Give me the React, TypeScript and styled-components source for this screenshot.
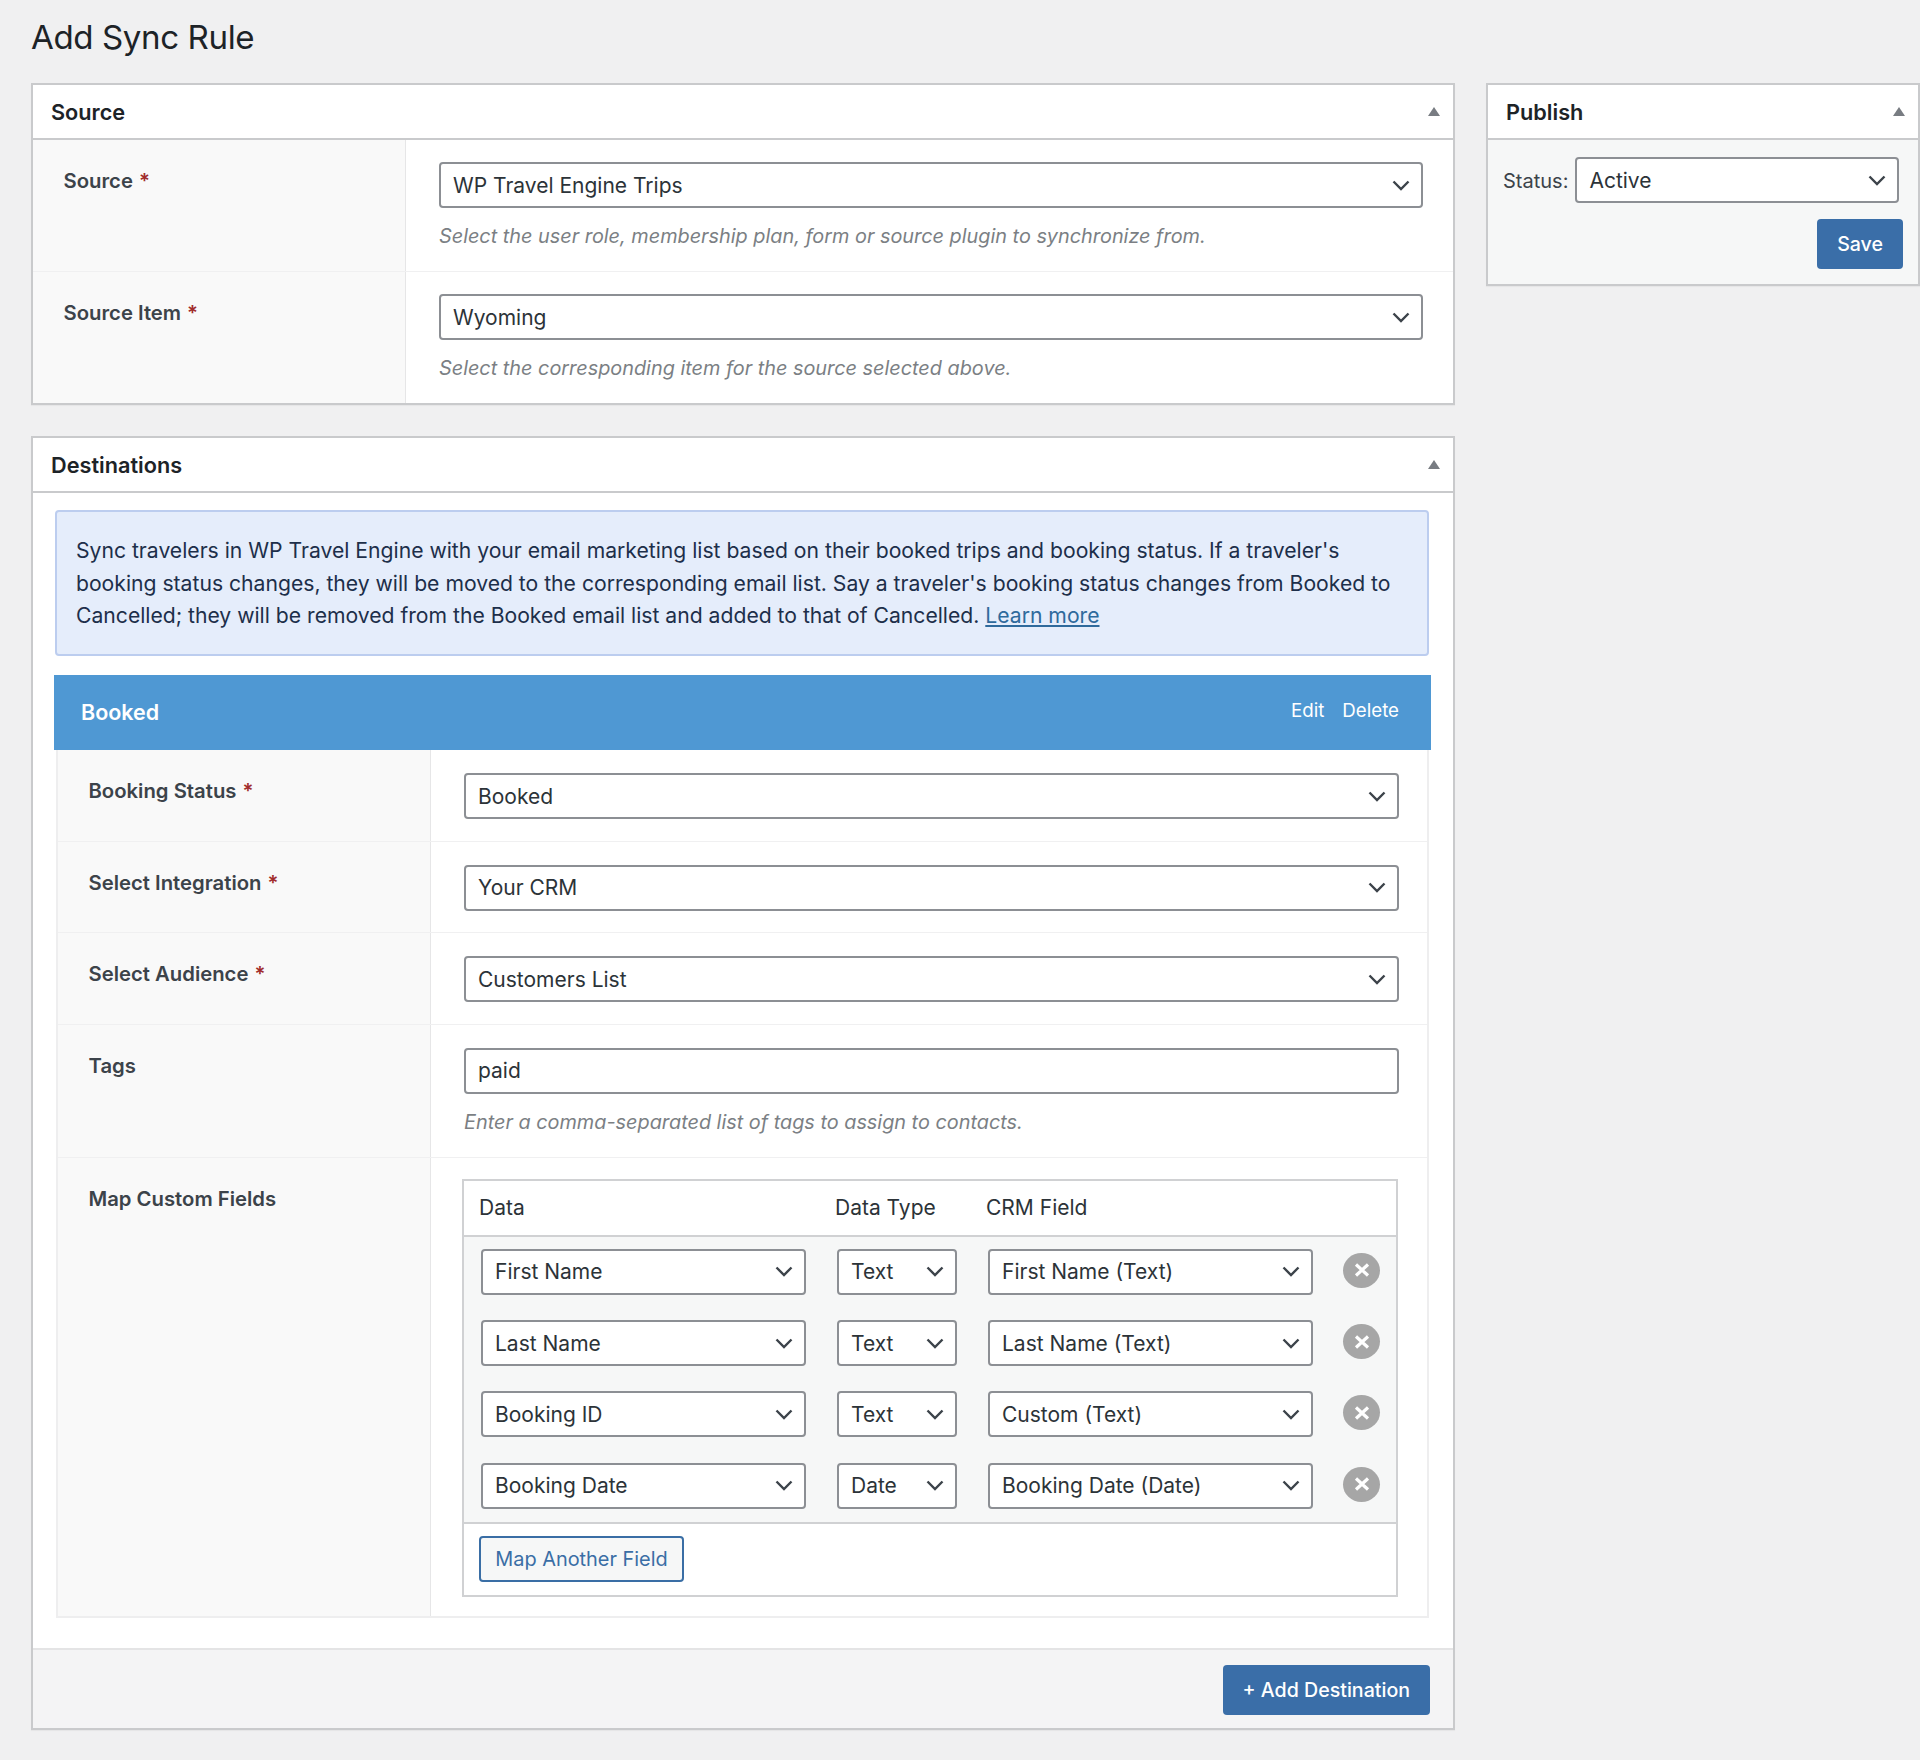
import { Fragment } from "react";
import styled, { createGlobalStyle } from "styled-components";

const Global = createGlobalStyle`
  html, body {
    margin: 0;
    padding: 0;
    background: #f0f0f1;
    color: #2c3338;
    font-family: Inter, "Noto Sans", "Liberation Sans", sans-serif;
    font-size: 20px;
  }
  * { box-sizing: border-box; }
`;

const S = {
  Page: styled.div`
    width: 1920px;
    height: 1760px;
    padding-left: 31px;
    overflow: hidden;
  `,
  Title: styled.h1`
    margin: 0;
    height: 83px;
    padding-top: 15px;
    font-size: 33.1px;
    line-height: 44px;
    font-weight: 400;
    letter-spacing: -0.4px;
    color: #1d2327;
  `,
  Columns: styled.div`
    display: flex;
    align-items: flex-start;
    gap: 31px;
  `,
  Main: styled.div`
    width: 1424px;
    display: flex;
    flex-direction: column;
    gap: 31px;
  `,
  Side: styled.div`
    width: 434px;
  `,
  Card: styled.section`
    background: #fff;
    border: 2px solid #c9cacc;
    box-shadow: 0 1px 1px rgba(0, 0, 0, 0.04);
  `,
  CardHead: styled.header`
    height: 55px;
    padding: 0 13px 0 18px;
    display: flex;
    align-items: center;
    justify-content: space-between;
    border-bottom: 2px solid #c9cacc;
    background: #fff;
  `,
  CardTitle: styled.h2`
    margin: 0;
    font-size: 21.7px;
    font-weight: 600;
    color: #1d2327;
  `,
  Row: styled.div`
    display: grid;
    grid-template-columns: 373px 1fr;
    border-bottom: 1px solid #f0f0f1;
    &:last-child { border-bottom: 0; }
  `,
  LabelCell: styled.div`
    padding: 27px 10px 0 30.5px;
    background: #f9f9f9;
    border-right: 1px solid #e6e6e7;
    font-size: 20.3px;
    line-height: 28px;
    font-weight: 600;
    color: #3c434a;
  `,
  Required: styled.span`
    margin-left: 6px;
    color: #a12c2c;
  `,
  ValueCell: styled.div<{ $top?: number; $bottom?: number; $end?: number }>`
    padding: ${(p) => p.$top ?? 23}px ${(p) => p.$end ?? 30}px ${(p) => p.$bottom ?? 21}px 33px;
  `,
  Select: styled.div`
    height: 46px;
    padding: 0 11px 0 12px;
    display: flex;
    flex: 1;
    align-items: center;
    justify-content: space-between;
    background: #fff;
    border: 2px solid #8c8f94;
    border-radius: 4px;
    font-size: 21px;
    color: #2c3338;
  `,
  TextBox: styled.div`
    height: 46px;
    padding: 0 12px;
    display: flex;
    align-items: center;
    background: #fff;
    border: 2px solid #8c8f94;
    border-radius: 4px;
    font-size: 21px;
    color: #2c3338;
  `,
  Hint: styled.p`
    margin: 15px 0 0;
    font-size: 19.85px;
    line-height: 27px;
    font-style: italic;
    color: #7b7f84;
  `,
  Body: styled.div`
    padding: 17px 22px 30px 21px;
  `,
  Notice: styled.div`
    margin: 0 2px 19px 1px;
    padding: 23px 17px 21px 19px;
    background: #e5edfb;
    border: 2px solid #bccdef;
    border-radius: 4px;
    font-size: 21.15px;
    line-height: 32.7px;
    color: #1d2f4a;
  `,
  Link: styled.a`
    color: #2f6a9c;
    text-decoration: underline;
  `,
  Bar: styled.div`
    height: 75px;
    padding: 0 32px 2px 27px;
    display: flex;
    align-items: center;
    justify-content: space-between;
    background: #4f98d3;
    color: #fff;
  `,
  BarTitle: styled.span`
    font-size: 21.5px;
    font-weight: 600;
  `,
  BarActions: styled.span`
    display: flex;
    gap: 18px;
    padding-bottom: 3px;
    font-size: 18.7px;
  `,
  DestTable: styled.div`
    margin: 0 2px 0 2px;
    border: 2px solid #eeeeef;
    border-top: 0;
  `,
  MapTable: styled.div`
    margin-left: -2px;
    border: 2px solid #d0d1d3;
  `,
  MapHead: styled.div`
    height: 54px;
    padding-left: 15px;
    display: grid;
    grid-template-columns: 356px 151px 1fr;
    align-items: center;
    font-size: 21px;
    color: #2c3338;
  `,
  MapBody: styled.div`
    padding: 12px 0 13px 17px;
    display: grid;
    grid-template-columns: 325px 120px 325px 37px;
    column-gap: 31px;
    row-gap: 25.4px;
    align-items: center;
    background: #f6f7f7;
    border-top: 2px solid #d0d1d3;
    border-bottom: 2px solid #d0d1d3;
  `,
  Remove: styled.span`
    width: 37px;
    height: 35px;
    margin: -3px 0 0 -1px;
    display: flex;
    align-items: center;
    justify-content: center;
    border-radius: 50%;
    background: #a6a6a6;
  `,
  MapFoot: styled.div`
    padding: 12px 15px 13px;
  `,
  OutlineButton: styled.button`
    display: block;
    width: 205px;
    height: 46px;
    padding: 0;
    background: #f6f7f7;
    border: 2px solid #3a6ea5;
    border-radius: 4px;
    font: inherit;
    font-size: 19.9px;
    color: #3a6ea5;
  `,
  Footer: styled.div`
    padding: 15px 23px 13px;
    display: flex;
    justify-content: flex-end;
    background: #f4f4f5;
    border-top: 2px solid #e4e4e5;
  `,
  PrimaryButton: styled.button`
    height: 50px;
    padding: 0 20px;
    background: #3a6ea8;
    border: 0;
    border-radius: 4px;
    font: inherit;
    font-size: 19.6px;
    font-weight: 500;
    color: #fff;
  `,
  PublishBody: styled.div`
    padding: 17px 15px 15px 15px;
    background: #f6f7f7;
  `,
  StatusLine: styled.div`
    display: flex;
    align-items: center;
    gap: 7px;
    padding-right: 4px;
    font-size: 20px;
    color: #3c434a;
  `,
  StatusLabel: styled.span`
    margin-top: 2px;
  `,
  SaveLine: styled.div`
    margin-top: 16px;
    display: flex;
    justify-content: flex-end;
  `,
};

const Chevron = () => (
  <svg width="18" height="11" viewBox="0 0 18 11" fill="none">
    <path d="M1.5 1.5 L9 9 L16.5 1.5" stroke="#3c434a" strokeWidth="2.4" />
  </svg>
);

const Toggle = () => (
  <svg width="12" height="9" viewBox="0 0 12 9">
    <polygon points="6,0 12,9 0,9" fill="#787c82" />
  </svg>
);

const Cross = () => (
  <svg width="16" height="14" viewBox="0 0 16 14" fill="none">
    <path d="M2 1.5 L14 12.5 M14 1.5 L2 12.5" stroke="#fff" strokeWidth="3.2" />
  </svg>
);

const Select = ({ value }: { value: string }) => (
  <S.Select>
    {value}
    <Chevron />
  </S.Select>
);

const Required = () => <S.Required>*</S.Required>;

const mappings = [
  ["First Name", "Text", "First Name (Text)"],
  ["Last Name", "Text", "Last Name (Text)"],
  ["Booking ID", "Text", "Custom (Text)"],
  ["Booking Date", "Date", "Booking Date (Date)"],
];

export default function App() {
  return (
    <S.Page>
      <Global />
      <S.Title>Add Sync Rule</S.Title>
      <S.Columns>
        <S.Main>
          <S.Card>
            <S.CardHead>
              <S.CardTitle>Source</S.CardTitle>
              <Toggle />
            </S.CardHead>
            <S.Row>
              <S.LabelCell>
                Source
                <Required />
              </S.LabelCell>
              <S.ValueCell $top={22}>
                <Select value="WP Travel Engine Trips" />
                <S.Hint>
                  Select the user role, membership plan, form or source plugin to synchronize from.
                </S.Hint>
              </S.ValueCell>
            </S.Row>
            <S.Row>
              <S.LabelCell>
                Source Item
                <Required />
              </S.LabelCell>
              <S.ValueCell $top={22}>
                <Select value="Wyoming" />
                <S.Hint>Select the corresponding item for the source selected above.</S.Hint>
              </S.ValueCell>
            </S.Row>
          </S.Card>

          <S.Card>
            <S.CardHead>
              <S.CardTitle>Destinations</S.CardTitle>
              <Toggle />
            </S.CardHead>
            <S.Body>
              <S.Notice>
                Sync travelers in WP Travel Engine with your email marketing list based on their booked trips and
                booking status. If a traveler's booking status changes, they will be moved to the corresponding email
                list. Say a traveler's booking status changes from Booked to Cancelled; they will be removed from the
                Booked email list and added to that of Cancelled. <S.Link href="#">Learn more</S.Link>
              </S.Notice>
              <S.Bar>
                <S.BarTitle>Booked</S.BarTitle>
                <S.BarActions>
                  <span>Edit</span>
                  <span>Delete</span>
                </S.BarActions>
              </S.Bar>
              <S.DestTable>
                <S.Row>
                  <S.LabelCell>
                    Booking Status
                    <Required />
                  </S.LabelCell>
                  <S.ValueCell $end={28} $bottom={21.5}>
                    <Select value="Booked" />
                  </S.ValueCell>
                </S.Row>
                <S.Row>
                  <S.LabelCell>
                    Select Integration
                    <Required />
                  </S.LabelCell>
                  <S.ValueCell $end={28} $bottom={21.5}>
                    <Select value="Your CRM" />
                  </S.ValueCell>
                </S.Row>
                <S.Row>
                  <S.LabelCell>
                    Select Audience
                    <Required />
                  </S.LabelCell>
                  <S.ValueCell $end={28} $bottom={21.5}>
                    <Select value="Customers List" />
                  </S.ValueCell>
                </S.Row>
                <S.Row>
                  <S.LabelCell>Tags</S.LabelCell>
                  <S.ValueCell $end={28}>
                    <S.TextBox>paid</S.TextBox>
                    <S.Hint>Enter a comma-separated list of tags to assign to contacts.</S.Hint>
                  </S.ValueCell>
                </S.Row>
                <S.Row>
                  <S.LabelCell>Map Custom Fields</S.LabelCell>
                  <S.ValueCell $top={21} $bottom={19} $end={29}>
                    <S.MapTable>
                      <S.MapHead>
                        <span>Data</span>
                        <span>Data Type</span>
                        <span>CRM Field</span>
                      </S.MapHead>
                      <S.MapBody>
                        {mappings.map(([data, type, field]) => (
                          <Fragment key={data}>
                            <Select value={data} />
                            <Select value={type} />
                            <Select value={field} />
                            <S.Remove>
                              <Cross />
                            </S.Remove>
                          </Fragment>
                        ))}
                      </S.MapBody>
                      <S.MapFoot>
                        <S.OutlineButton>Map Another Field</S.OutlineButton>
                      </S.MapFoot>
                    </S.MapTable>
                  </S.ValueCell>
                </S.Row>
              </S.DestTable>
            </S.Body>
            <S.Footer>
              <S.PrimaryButton>+ Add Destination</S.PrimaryButton>
            </S.Footer>
          </S.Card>
        </S.Main>

        <S.Side>
          <S.Card>
            <S.CardHead>
              <S.CardTitle>Publish</S.CardTitle>
              <Toggle />
            </S.CardHead>
            <S.PublishBody>
              <S.StatusLine>
                <S.StatusLabel>Status:</S.StatusLabel>
                <Select value="Active" />
              </S.StatusLine>
              <S.SaveLine>
                <S.PrimaryButton>Save</S.PrimaryButton>
              </S.SaveLine>
            </S.PublishBody>
          </S.Card>
        </S.Side>
      </S.Columns>
    </S.Page>
  );
}
